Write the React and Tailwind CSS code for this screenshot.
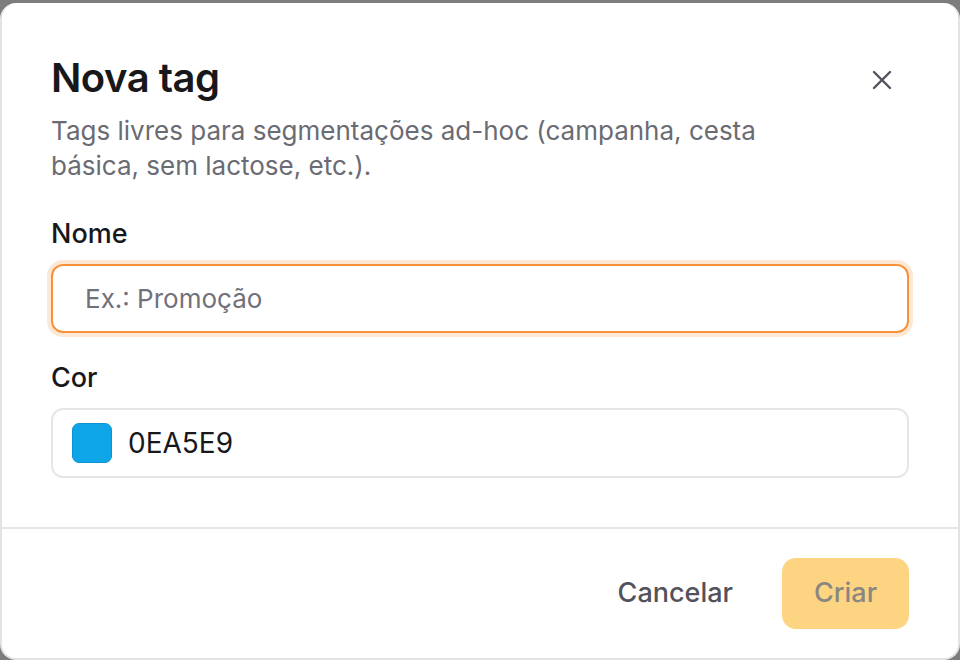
import React from "react";

export default function App() {
  return (
    <div
      className="h-[660px] w-[960px] bg-[#7d7d7d] pt-[3px] overflow-hidden"
      style={{ fontFamily: "Inter, 'Noto Sans', sans-serif" }}
    >
      <div className="flex h-[657px] flex-col rounded-[16px] border-2 border-t-0 border-[#e3e3e3] bg-white">
        <div className="px-[49px] pt-[53px] pb-[49px]">
          <div className="flex items-start justify-between">
            <h2 className="text-[40px] font-semibold leading-[44px] tracking-[-0.5px] text-[#18181b]">
              Nova tag
            </h2>
            <button className="mr-[17px] mt-[14px] flex h-[20px] w-[20px] items-center justify-center text-[#52525b]">
              <svg width="20" height="20" viewBox="0 0 20 20" fill="none">
                <path
                  d="M2 2L18 18M18 2L2 18"
                  stroke="currentColor"
                  strokeWidth="2.4"
                  strokeLinecap="round"
                />
              </svg>
            </button>
          </div>
          <p className="mt-[13px] w-[760px] text-[26px] leading-[35px] text-[#6b6b73]">
            Tags livres para segmentações ad-hoc (campanha, cesta básica, sem lactose, etc.).
          </p>

          <div className="mt-[35px] text-[27px] font-medium leading-[32px] text-[#18181b]">
            Nome
          </div>
          <div className="mt-[14px] flex h-[69px] items-center rounded-[12px] border-2 border-[#f7923a] pl-[32px] shadow-[0_0_0_4px_#fde7d5]">
            <span className="text-[26px] text-[#71717a]">Ex.: Promoção</span>
          </div>

          <div className="mt-[29px] text-[27px] font-medium leading-[32px] text-[#18181b]">
            Cor
          </div>
          <div className="mt-[14px] flex h-[70px] items-center gap-[16px] rounded-[12px] border-2 border-[#e6e6e8] pl-[19px]">
            <div className="h-[40px] w-[40px] rounded-[7px] border border-[#0c94d2] bg-[#0ea5e9]" />
            <span className="text-[28px] text-[#18181b]">0EA5E9</span>
          </div>
        </div>

        <div className="flex items-center justify-end gap-[17px] border-t-2 border-[#e6e6e6] px-[49px] pt-[29px]">
          <button className="flex h-[71px] items-center px-[32px] text-[27px] font-medium text-[#52525b]">
            Cancelar
          </button>
          <button className="flex h-[71px] w-[127px] items-center justify-center rounded-[14px] bg-[#fdd582] text-[27px] font-medium text-[#8a8782]">
            Criar
          </button>
        </div>
      </div>
    </div>
  );
}
